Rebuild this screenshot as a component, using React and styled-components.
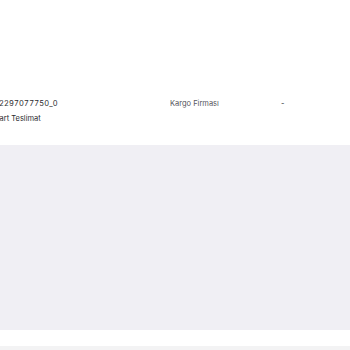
import styled, { createGlobalStyle } from "styled-components";

const Global = createGlobalStyle`
  body {
    margin: 0;
    background: #ffffff;
    font-family: Inter, "Noto Sans", sans-serif;
  }
`;

const Page = styled.div`
  width: 350px;
  height: 350px;
  overflow: hidden;
  display: flex;
  flex-direction: column;
`;

const Header = styled.div`
  height: 99px;
  flex-shrink: 0;
`;

const InfoRow = styled.div`
  display: grid;
  grid-template-columns: 191px 111px 1fr;
  margin-left: -21px;
  height: 46px;
  flex-shrink: 0;
`;

const Col = styled.div`
  display: flex;
  flex-direction: column;
  gap: 5px;
`;

const Text = styled.span`
  font-size: 7.5px;
  line-height: 10px;
  color: ${(p) => (p.$muted ? "#55555c" : "#2b2b2f")};
  white-space: nowrap;
`;

const OrderNo = styled(Text)`
  font-variant-numeric: tabular-nums;
  letter-spacing: 0.15px;
`;

const Panel = styled.div`
  height: 185px;
  background: #f0eff4;
  flex-shrink: 0;
`;

const Footer = styled.div`
  height: 16px;
  flex-shrink: 0;
`;

const Divider = styled.div`
  height: 4px;
  background: #f3f3f4;
`;

export default function App() {
  return (
    <Page>
      <Global />
      <Header />
      <InfoRow>
        <Col>
          <OrderNo>31802297077750_0</OrderNo>
          <Text>Standart Teslimat</Text>
        </Col>
        <Col>
          <Text $muted>Kargo Firması</Text>
        </Col>
        <Col>
          <Text>-</Text>
        </Col>
      </InfoRow>
      <Panel />
      <Footer />
      <Divider />
    </Page>
  );
}
